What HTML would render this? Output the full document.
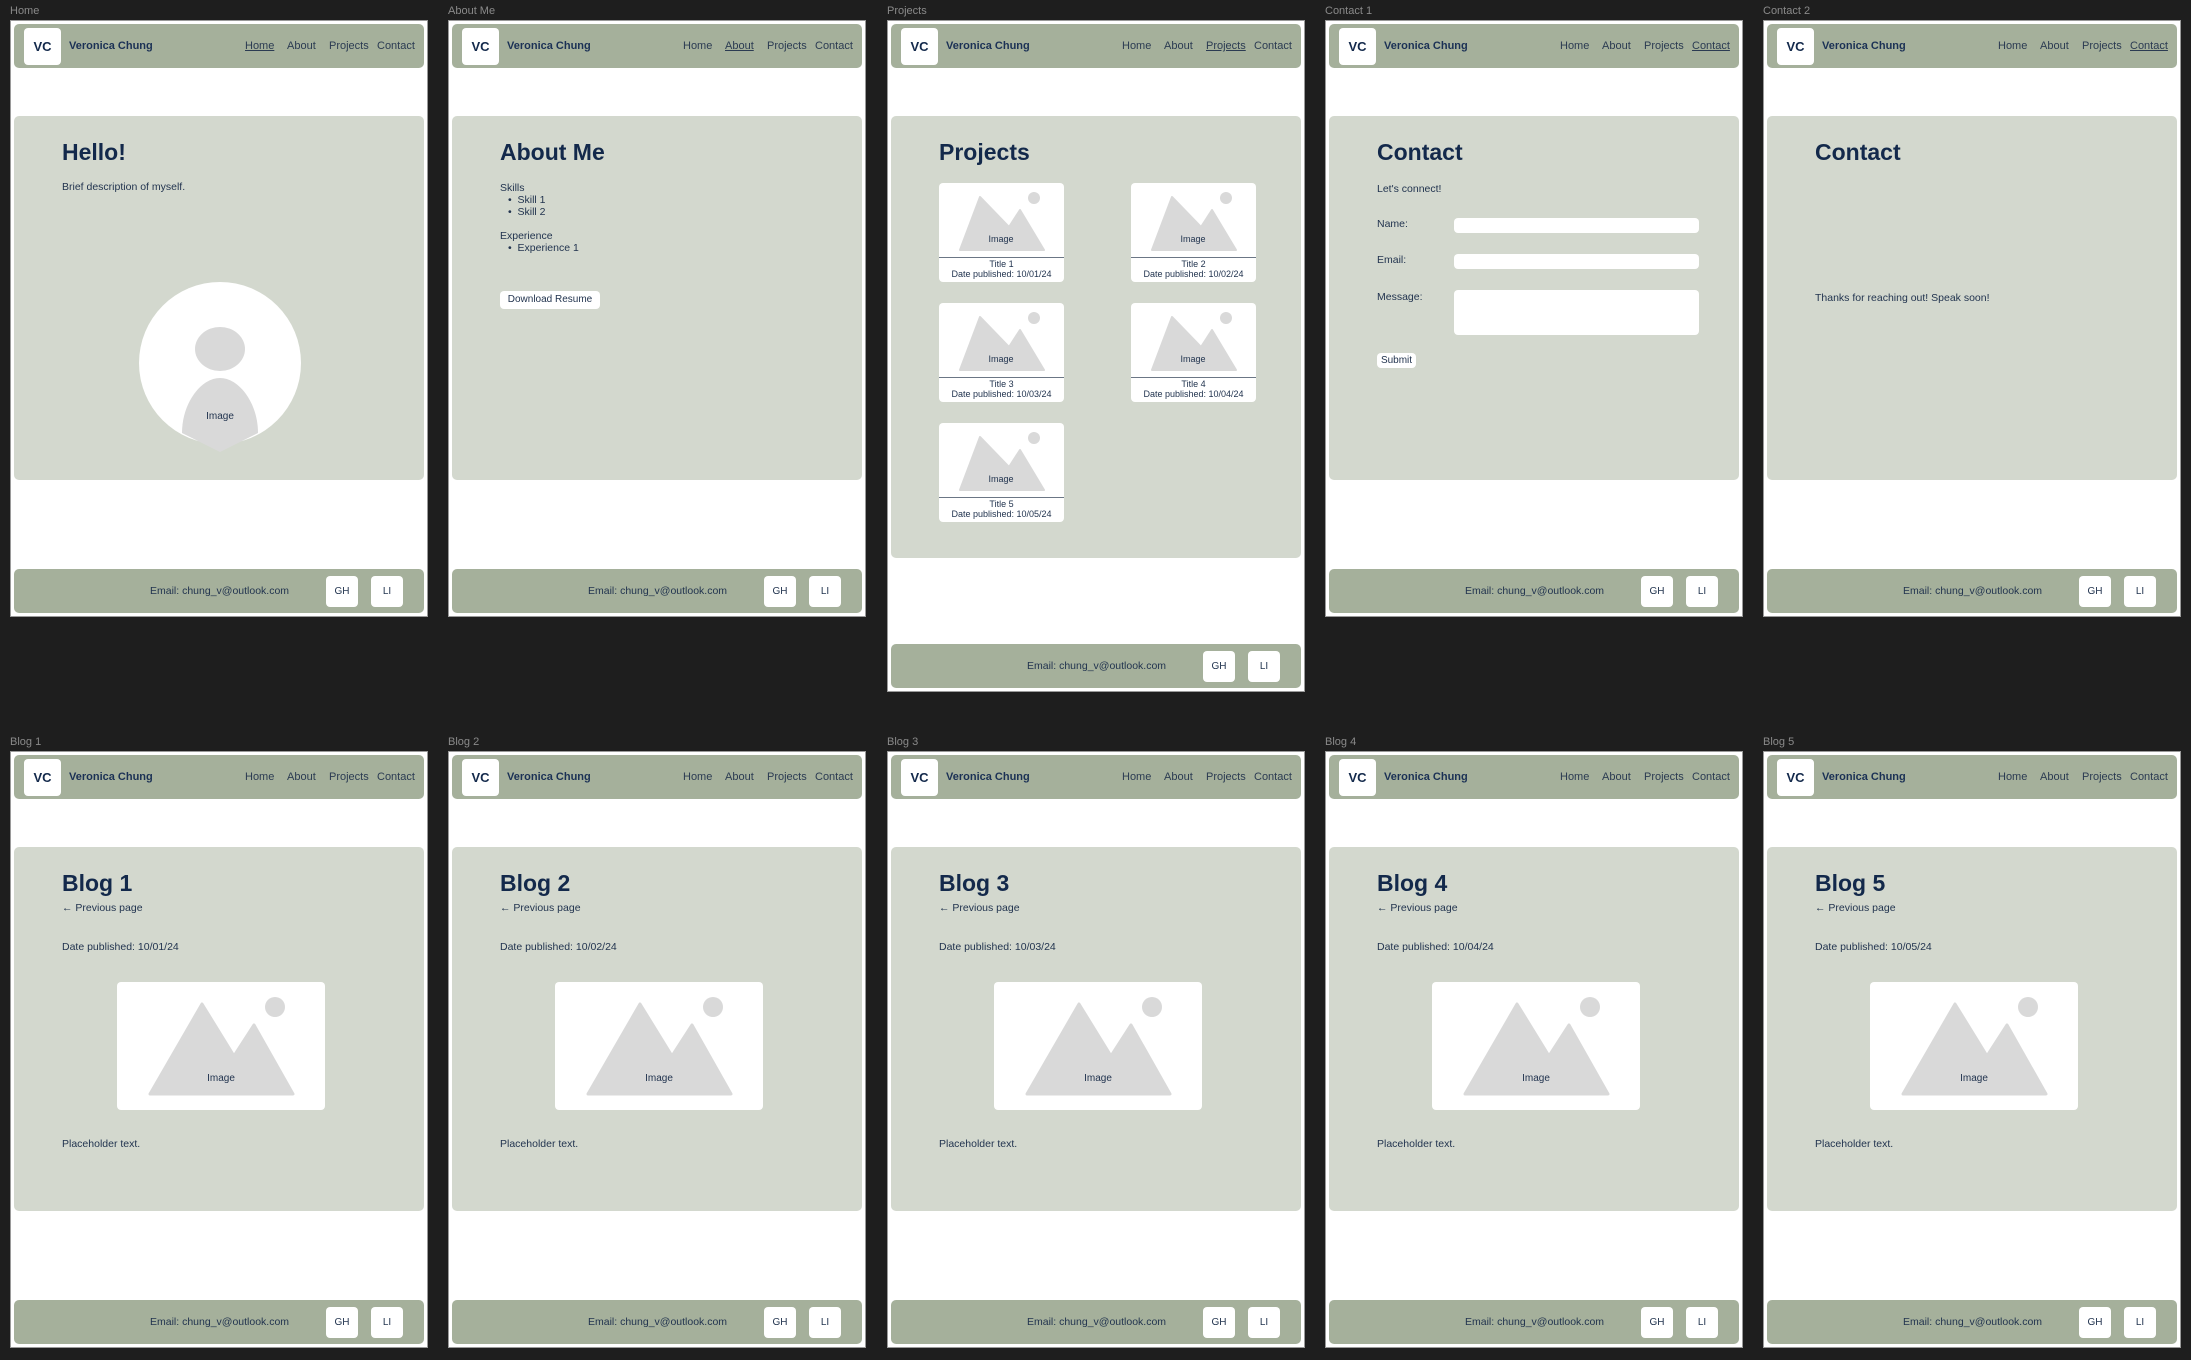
<!DOCTYPE html>
<html><head><meta charset="utf-8"><style>
*{margin:0;padding:0;box-sizing:border-box}
body{width:2191px;height:1360px;background:#1e1e1e;position:relative;overflow:hidden;font-family:"Liberation Sans",Arial,sans-serif;color:#22344f}
.lb{position:absolute;font-size:11px;color:#8a8a8a;line-height:13px}
.f{position:absolute;width:418px;height:597px;background:#fff;border:1px solid #9a9a9a}
.f>*{position:absolute}
.hd{left:3px;top:3px;width:410px;height:44px;background:#a5b09b;border-radius:5px}
.hd>*{position:absolute}
.lg{left:10px;top:4px;width:37px;height:37px;background:#fff;border-radius:4px;font-weight:bold;font-size:13px;color:#13294b;text-align:center;line-height:37px}
.nm{left:55px;top:0;line-height:44px;font-weight:bold;font-size:11px;color:#1b3155}
.nv{top:0;line-height:44px;font-size:11px;color:#2b3b52}
.u{text-decoration:underline}
.mn{left:3px;top:95px;width:410px;height:364px;background:#d3d8ce;border-radius:5px}
.ft{left:3px;top:548px;width:410px;height:44px;background:#a5b09b;border-radius:5px}
.ft>*{position:absolute}
.em{left:136px;top:0;line-height:44px;font-size:10.5px;color:#22344f}
.bt{top:7px;width:32px;height:31px;background:#fff;border-radius:4px;font-size:10px;text-align:center;line-height:31px;color:#22344f}
.h1{left:51px;top:119px;font-size:23px;font-weight:bold;line-height:24px;color:#13294b}
.t{font-size:10.5px;line-height:13px;white-space:nowrap}
.wb{background:#fff;border-radius:4px}
.card{width:125px;height:99px;background:#fff;border-radius:4px}
.card>*{position:absolute}
.card .ln{left:0;top:74px;width:125px;height:1px;background:#6b7685}
.card .c{left:0;width:125px;text-align:center;font-size:9px;line-height:11px}
</style></head><body>

<div class="lb" style="left:10px;top:5px">Home</div>
<div class="lb" style="left:448px;top:5px">About Me</div>
<div class="lb" style="left:887px;top:5px">Projects</div>
<div class="lb" style="left:1325px;top:5px">Contact 1</div>
<div class="lb" style="left:1763px;top:5px">Contact 2</div>
<div class="lb" style="left:10px;top:736px">Blog 1</div>
<div class="lb" style="left:448px;top:736px">Blog 2</div>
<div class="lb" style="left:887px;top:736px">Blog 3</div>
<div class="lb" style="left:1325px;top:736px">Blog 4</div>
<div class="lb" style="left:1763px;top:736px">Blog 5</div>

<!-- HOME -->
<div class="f" style="left:10px;top:20px">
<div class="hd"><div class="lg">VC</div><div class="nm">Veronica Chung</div><div class="nv u" style="left:231px">Home</div><div class="nv" style="left:273px">About</div><div class="nv" style="left:315px">Projects</div><div class="nv" style="left:363px">Contact</div></div>
<div class="mn"></div>
<div class="h1">Hello!</div>
<div class="t" style="left:51px;top:160px">Brief description of myself.</div>
<svg style="left:0;top:0" width="418" height="597">
<circle cx="209" cy="342" r="81" fill="#fff"/>
<ellipse cx="209" cy="328" rx="25" ry="22" fill="#d9d9d9"/>
<path d="M171,412 C171,382 190,357 209,357 C228,357 247,382 247,412 L209,431 Z" fill="#d9d9d9"/>
<text x="209" y="398" font-size="10" text-anchor="middle" fill="#22344f" font-family="Liberation Sans">Image</text></svg>
<div class="ft"><div class="em">Email: chung_v@outlook.com</div><div class="bt" style="left:312px">GH</div><div class="bt" style="left:357px">LI</div></div>
</div>

<!-- ABOUT -->
<div class="f" style="left:448px;top:20px">
<div class="hd"><div class="lg">VC</div><div class="nm">Veronica Chung</div><div class="nv" style="left:231px">Home</div><div class="nv u" style="left:273px">About</div><div class="nv" style="left:315px">Projects</div><div class="nv" style="left:363px">Contact</div></div>
<div class="mn"></div>
<div class="h1">About Me</div>
<div class="t" style="left:51px;top:161px">Skills</div>
<div class="t" style="left:59px;top:173px">•&nbsp; Skill 1</div>
<div class="t" style="left:59px;top:185px">•&nbsp; Skill 2</div>
<div class="t" style="left:51px;top:209px">Experience</div>
<div class="t" style="left:59px;top:221px">•&nbsp; Experience 1</div>
<div class="t wb" style="left:51px;top:270px;width:100px;height:18px;line-height:18px;text-align:center;font-size:10px">Download Resume</div>
<div class="ft"><div class="em">Email: chung_v@outlook.com</div><div class="bt" style="left:312px">GH</div><div class="bt" style="left:357px">LI</div></div>
</div>

<!-- PROJECTS -->
<div class="f" style="left:887px;top:20px;height:672px">
<div class="hd"><div class="lg">VC</div><div class="nm">Veronica Chung</div><div class="nv" style="left:231px">Home</div><div class="nv" style="left:273px">About</div><div class="nv u" style="left:315px">Projects</div><div class="nv" style="left:363px">Contact</div></div>
<div class="mn" style="height:442px"></div>
<div class="h1">Projects</div>
<div class="card" style="left:51px;top:162px"><svg width="125" height="74"><path d="M21,67 L41,14 L70,44 L81,27 L105,67 Z" fill="#d9d9d9" stroke="#d9d9d9" stroke-width="2" stroke-linejoin="round"/><circle cx="95" cy="15" r="6" fill="#d9d9d9"/><text x="62" y="59" font-size="9" text-anchor="middle" fill="#22344f" font-family="Liberation Sans">Image</text></svg><div class="ln"></div><div class="c" style="top:76px">Title 1</div><div class="c" style="top:86px">Date published: 10/01/24</div></div>
<div class="card" style="left:243px;top:162px"><svg width="125" height="74"><path d="M21,67 L41,14 L70,44 L81,27 L105,67 Z" fill="#d9d9d9" stroke="#d9d9d9" stroke-width="2" stroke-linejoin="round"/><circle cx="95" cy="15" r="6" fill="#d9d9d9"/><text x="62" y="59" font-size="9" text-anchor="middle" fill="#22344f" font-family="Liberation Sans">Image</text></svg><div class="ln"></div><div class="c" style="top:76px">Title 2</div><div class="c" style="top:86px">Date published: 10/02/24</div></div>
<div class="card" style="left:51px;top:282px"><svg width="125" height="74"><path d="M21,67 L41,14 L70,44 L81,27 L105,67 Z" fill="#d9d9d9" stroke="#d9d9d9" stroke-width="2" stroke-linejoin="round"/><circle cx="95" cy="15" r="6" fill="#d9d9d9"/><text x="62" y="59" font-size="9" text-anchor="middle" fill="#22344f" font-family="Liberation Sans">Image</text></svg><div class="ln"></div><div class="c" style="top:76px">Title 3</div><div class="c" style="top:86px">Date published: 10/03/24</div></div>
<div class="card" style="left:243px;top:282px"><svg width="125" height="74"><path d="M21,67 L41,14 L70,44 L81,27 L105,67 Z" fill="#d9d9d9" stroke="#d9d9d9" stroke-width="2" stroke-linejoin="round"/><circle cx="95" cy="15" r="6" fill="#d9d9d9"/><text x="62" y="59" font-size="9" text-anchor="middle" fill="#22344f" font-family="Liberation Sans">Image</text></svg><div class="ln"></div><div class="c" style="top:76px">Title 4</div><div class="c" style="top:86px">Date published: 10/04/24</div></div>
<div class="card" style="left:51px;top:402px"><svg width="125" height="74"><path d="M21,67 L41,14 L70,44 L81,27 L105,67 Z" fill="#d9d9d9" stroke="#d9d9d9" stroke-width="2" stroke-linejoin="round"/><circle cx="95" cy="15" r="6" fill="#d9d9d9"/><text x="62" y="59" font-size="9" text-anchor="middle" fill="#22344f" font-family="Liberation Sans">Image</text></svg><div class="ln"></div><div class="c" style="top:76px">Title 5</div><div class="c" style="top:86px">Date published: 10/05/24</div></div>
<div class="ft" style="top:623px"><div class="em">Email: chung_v@outlook.com</div><div class="bt" style="left:312px">GH</div><div class="bt" style="left:357px">LI</div></div>
</div>

<!-- CONTACT 1 -->
<div class="f" style="left:1325px;top:20px">
<div class="hd"><div class="lg">VC</div><div class="nm">Veronica Chung</div><div class="nv" style="left:231px">Home</div><div class="nv" style="left:273px">About</div><div class="nv" style="left:315px">Projects</div><div class="nv u" style="left:363px">Contact</div></div>
<div class="mn"></div>
<div class="h1">Contact</div>
<div class="t" style="left:51px;top:162px">Let's connect!</div>
<div class="t" style="left:51px;top:197px">Name:</div>
<div class="wb" style="left:128px;top:197px;width:245px;height:15px"></div>
<div class="t" style="left:51px;top:233px">Email:</div>
<div class="wb" style="left:128px;top:233px;width:245px;height:15px"></div>
<div class="t" style="left:51px;top:270px">Message:</div>
<div class="wb" style="left:128px;top:269px;width:245px;height:45px"></div>
<div class="t wb" style="left:51px;top:332px;width:39px;height:15px;line-height:15px;text-align:center;font-size:10px">Submit</div>
<div class="ft"><div class="em">Email: chung_v@outlook.com</div><div class="bt" style="left:312px">GH</div><div class="bt" style="left:357px">LI</div></div>
</div>

<!-- CONTACT 2 -->
<div class="f" style="left:1763px;top:20px">
<div class="hd"><div class="lg">VC</div><div class="nm">Veronica Chung</div><div class="nv" style="left:231px">Home</div><div class="nv" style="left:273px">About</div><div class="nv" style="left:315px">Projects</div><div class="nv u" style="left:363px">Contact</div></div>
<div class="mn"></div>
<div class="h1">Contact</div>
<div class="t" style="left:51px;top:271px">Thanks for reaching out! Speak soon!</div>
<div class="ft"><div class="em">Email: chung_v@outlook.com</div><div class="bt" style="left:312px">GH</div><div class="bt" style="left:357px">LI</div></div>
</div>

<!-- BLOGS -->
<div class="f" style="left:10px;top:751px">
<div class="hd"><div class="lg">VC</div><div class="nm">Veronica Chung</div><div class="nv" style="left:231px">Home</div><div class="nv" style="left:273px">About</div><div class="nv" style="left:315px">Projects</div><div class="nv" style="left:363px">Contact</div></div>
<div class="mn"></div>
<div class="h1">Blog 1</div>
<div class="t" style="left:51px;top:150px">← Previous page</div>
<div class="t" style="left:51px;top:189px">Date published: 10/01/24</div>
<svg style="left:106px;top:230px" width="208" height="128"><rect width="208" height="128" rx="4" fill="#fff"/><path d="M33,112 L85,22 L117,74 L137,43 L176,112 Z" fill="#d9d9d9" stroke="#d9d9d9" stroke-width="3" stroke-linejoin="round"/><circle cx="158" cy="25" r="10" fill="#d9d9d9"/><text x="104" y="99" font-size="10" text-anchor="middle" fill="#22344f" font-family="Liberation Sans">Image</text></svg>
<div class="t" style="left:51px;top:386px">Placeholder text.</div>
<div class="ft"><div class="em">Email: chung_v@outlook.com</div><div class="bt" style="left:312px">GH</div><div class="bt" style="left:357px">LI</div></div>
</div>

<div class="f" style="left:448px;top:751px">
<div class="hd"><div class="lg">VC</div><div class="nm">Veronica Chung</div><div class="nv" style="left:231px">Home</div><div class="nv" style="left:273px">About</div><div class="nv" style="left:315px">Projects</div><div class="nv" style="left:363px">Contact</div></div>
<div class="mn"></div>
<div class="h1">Blog 2</div>
<div class="t" style="left:51px;top:150px">← Previous page</div>
<div class="t" style="left:51px;top:189px">Date published: 10/02/24</div>
<svg style="left:106px;top:230px" width="208" height="128"><rect width="208" height="128" rx="4" fill="#fff"/><path d="M33,112 L85,22 L117,74 L137,43 L176,112 Z" fill="#d9d9d9" stroke="#d9d9d9" stroke-width="3" stroke-linejoin="round"/><circle cx="158" cy="25" r="10" fill="#d9d9d9"/><text x="104" y="99" font-size="10" text-anchor="middle" fill="#22344f" font-family="Liberation Sans">Image</text></svg>
<div class="t" style="left:51px;top:386px">Placeholder text.</div>
<div class="ft"><div class="em">Email: chung_v@outlook.com</div><div class="bt" style="left:312px">GH</div><div class="bt" style="left:357px">LI</div></div>
</div>

<div class="f" style="left:887px;top:751px">
<div class="hd"><div class="lg">VC</div><div class="nm">Veronica Chung</div><div class="nv" style="left:231px">Home</div><div class="nv" style="left:273px">About</div><div class="nv" style="left:315px">Projects</div><div class="nv" style="left:363px">Contact</div></div>
<div class="mn"></div>
<div class="h1">Blog 3</div>
<div class="t" style="left:51px;top:150px">← Previous page</div>
<div class="t" style="left:51px;top:189px">Date published: 10/03/24</div>
<svg style="left:106px;top:230px" width="208" height="128"><rect width="208" height="128" rx="4" fill="#fff"/><path d="M33,112 L85,22 L117,74 L137,43 L176,112 Z" fill="#d9d9d9" stroke="#d9d9d9" stroke-width="3" stroke-linejoin="round"/><circle cx="158" cy="25" r="10" fill="#d9d9d9"/><text x="104" y="99" font-size="10" text-anchor="middle" fill="#22344f" font-family="Liberation Sans">Image</text></svg>
<div class="t" style="left:51px;top:386px">Placeholder text.</div>
<div class="ft"><div class="em">Email: chung_v@outlook.com</div><div class="bt" style="left:312px">GH</div><div class="bt" style="left:357px">LI</div></div>
</div>

<div class="f" style="left:1325px;top:751px">
<div class="hd"><div class="lg">VC</div><div class="nm">Veronica Chung</div><div class="nv" style="left:231px">Home</div><div class="nv" style="left:273px">About</div><div class="nv" style="left:315px">Projects</div><div class="nv" style="left:363px">Contact</div></div>
<div class="mn"></div>
<div class="h1">Blog 4</div>
<div class="t" style="left:51px;top:150px">← Previous page</div>
<div class="t" style="left:51px;top:189px">Date published: 10/04/24</div>
<svg style="left:106px;top:230px" width="208" height="128"><rect width="208" height="128" rx="4" fill="#fff"/><path d="M33,112 L85,22 L117,74 L137,43 L176,112 Z" fill="#d9d9d9" stroke="#d9d9d9" stroke-width="3" stroke-linejoin="round"/><circle cx="158" cy="25" r="10" fill="#d9d9d9"/><text x="104" y="99" font-size="10" text-anchor="middle" fill="#22344f" font-family="Liberation Sans">Image</text></svg>
<div class="t" style="left:51px;top:386px">Placeholder text.</div>
<div class="ft"><div class="em">Email: chung_v@outlook.com</div><div class="bt" style="left:312px">GH</div><div class="bt" style="left:357px">LI</div></div>
</div>

<div class="f" style="left:1763px;top:751px">
<div class="hd"><div class="lg">VC</div><div class="nm">Veronica Chung</div><div class="nv" style="left:231px">Home</div><div class="nv" style="left:273px">About</div><div class="nv" style="left:315px">Projects</div><div class="nv" style="left:363px">Contact</div></div>
<div class="mn"></div>
<div class="h1">Blog 5</div>
<div class="t" style="left:51px;top:150px">← Previous page</div>
<div class="t" style="left:51px;top:189px">Date published: 10/05/24</div>
<svg style="left:106px;top:230px" width="208" height="128"><rect width="208" height="128" rx="4" fill="#fff"/><path d="M33,112 L85,22 L117,74 L137,43 L176,112 Z" fill="#d9d9d9" stroke="#d9d9d9" stroke-width="3" stroke-linejoin="round"/><circle cx="158" cy="25" r="10" fill="#d9d9d9"/><text x="104" y="99" font-size="10" text-anchor="middle" fill="#22344f" font-family="Liberation Sans">Image</text></svg>
<div class="t" style="left:51px;top:386px">Placeholder text.</div>
<div class="ft"><div class="em">Email: chung_v@outlook.com</div><div class="bt" style="left:312px">GH</div><div class="bt" style="left:357px">LI</div></div>
</div>

</body></html>
